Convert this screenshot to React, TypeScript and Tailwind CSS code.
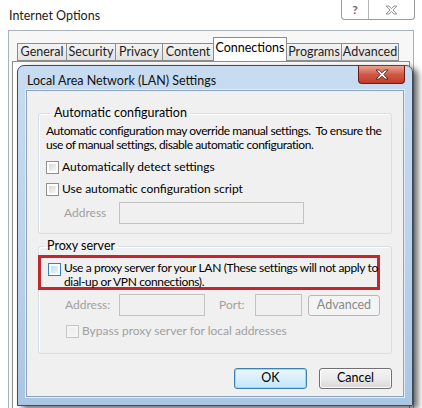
import React from 'react';

const font = { fontFamily: 'Lato, "Noto Sans", Arial, sans-serif' };

function Checkbox({ disabled, focused }: { disabled?: boolean; focused?: boolean }) {
  return (
    <div
      className={`w-[13px] h-[13px] shrink-0 border p-[2px] ${
        disabled ? 'border-[#c6c6c6] bg-[#f4f4f4]' : focused ? 'border-[#3c7fb1] bg-white' : 'border-[#8e8f8f] bg-white'
      }`}
    >
      <div
        className={`w-full h-full ${
          disabled
            ? 'bg-[#f0f0f0]'
            : focused
              ? 'bg-gradient-to-br from-[#b9e0f7] to-[#e4f4fc]'
              : 'bg-gradient-to-br from-[#d8d8d8] to-[#f8f8f8]'
        }`}
      />
    </div>
  );
}

const tabs = [
  { label: 'General', w: 'w-[50px]' },
  { label: 'Security', w: 'w-[50px]' },
  { label: 'Privacy', w: 'w-[48px]' },
  { label: 'Content', w: 'w-[52px]' },
  { label: 'Connections', w: 'w-[74px]', active: true },
  { label: 'Programs', w: 'w-[56px]' },
  { label: 'Advanced', w: 'w-[58px]' },
];

function Tab({ label, active, w }: { label: string; active?: boolean; w: string }) {
  return (
    <div
      className={`${w} flex items-center justify-center border border-[#8c8c8c] text-[12.5px] -mr-px ${
        active
          ? 'h-[24px] bg-white border-b-0 relative z-10 pb-[3px]'
          : 'h-[18px] bg-gradient-to-b from-[#f4f4f4] to-[#e2e2e2] text-[#1e1e1e]'
      }`}
    >
      {label}
    </div>
  );
}

function WinButton({ label, primary, disabled, w }: { label: string; primary?: boolean; disabled?: boolean; w: string }) {
  return (
    <div
      className={`${w} h-[21px] rounded-[3px] border flex items-center justify-center text-[12.5px] ${
        disabled
          ? 'border-[#b4b8bb] bg-[#f4f4f4] text-[#8a8a8a]'
          : primary
            ? 'border-[#3c7fb1] bg-gradient-to-b from-[#eaf6fd] via-[#d9effc] to-[#bee6fd] shadow-[inset_0_0_0_1px_#9fd5f5]'
            : 'border-[#707070] bg-gradient-to-b from-[#f3f3f3] via-[#ebebeb] to-[#d8d8d8] shadow-[inset_0_0_0_1px_#fbfbfb]'
      }`}
    >
      {label}
    </div>
  );
}

function GroupBox({ title, children, className }: { title: string; children: React.ReactNode; className?: string }) {
  return (
    <fieldset className={`min-w-0 border border-[#d5dfe5] rounded-[3px] shadow-[inset_1px_1px_0_#fff] ${className ?? ''}`}>
      <legend className="ml-[5px] px-[3px] text-[12.5px] leading-[14px]">{title}</legend>
      {children}
    </fieldset>
  );
}

function Field({ w }: { w: string }) {
  return <div className={`${w} h-[22px] border border-[#c2c2c2] bg-[#f0f0f0]`} />;
}

export default function App() {
  return (
    <div className="relative w-[422px] h-[408px] overflow-hidden bg-white text-black" style={font}>
      {/* Internet Options title bar */}
      <div className="h-[30px] flex items-start justify-between">
        <div className="pl-[9px] pt-[7px] text-[12.5px] text-[#1a1a1a]">Internet Options</div>
        <div className="mr-[7px] w-[74px] h-[20px] flex border border-t-0 border-[#9a9a9a] rounded-b-[4px] bg-white">
          <div className="w-[27px] flex items-center justify-center border-r border-[#b5b5b5] text-[12px] text-[#6a6a6a] font-bold">
            ?
          </div>
          <div className="flex-1 flex items-center justify-center">
            <svg width="13" height="10" viewBox="0 0 13 10">
              <path
                d="M1 1h3l2.5 2.6L9 1h3L8 5l4 4H9L6.5 6.4 4 9H1l4-4z"
                fill="#fafafa"
                stroke="#8a8a8a"
                strokeWidth="0.9"
                strokeLinejoin="round"
              />
            </svg>
          </div>
        </div>
      </div>

      {/* Internet Options client area */}
      <div className="mx-[8px] h-[400px] border border-[#a9b1b9] bg-[#f7f7f7] pt-[8px] px-[3px]">
        <div className="flex items-end pl-[5px] h-[22px]">
          {tabs.map((t) => (
            <Tab key={t.label} label={t.label} w={t.w} active={t.active} />
          ))}
        </div>
        <div className="h-[360px] border border-[#8c8c8c] bg-white" />
      </div>

      {/* LAN Settings dialog */}
      <div className="absolute left-[17px] top-[65px] w-[396px] h-[341px] rounded-t-[7px] border border-[#3f4c5b] bg-gradient-to-b from-[#c8dcf1] via-[#bcd3ec] to-[#aac6e4] shadow-[5px_3px_6px_rgba(0,0,0,0.6)] flex flex-col px-[8px] pb-[8px]">
        <div className="h-[24px] flex items-start justify-between">
          <div className="pt-[6px] pl-[1px] text-[12.5px] text-[#111]">Local Area Network (LAN) Settings</div>
          <div className="-mr-[1px] w-[47px] h-[18px] rounded-b-[4px] border border-t-0 border-[#6b1d14] bg-gradient-to-b from-[#e8a193] via-[#cf5a47] to-[#c23a25] flex items-center justify-center">
            <svg width="14" height="11" viewBox="0 0 14 11">
              <path
                d="M1 1h3.2l2.8 2.8L9.8 1H13L8.8 5.5 13 10H9.8L7 7.2 4.2 10H1l4.2-4.5z"
                fill="#fff"
                stroke="#5a1a12"
                strokeWidth="0.9"
                strokeLinejoin="round"
              />
            </svg>
          </div>
        </div>

        <div className="flex-1 border border-[#8aa3bf] shadow-[0_0_0_1px_#e3edf8] bg-[#f0f0f0] px-[11px] pt-[15px] flex flex-col">
          <GroupBox title="Automatic configuration" className="h-[128px] px-[7px]">
            <p className="text-[12px] leading-[14px] mt-[4px] whitespace-nowrap tracking-[-0.42px]">
              <span className="block">Automatic configuration may override manual settings.&nbsp; To ensure the</span>
              <span className="block">use of manual settings, disable automatic configuration.</span>
            </p>
            <div className="flex items-center gap-[3px] mt-[8px] text-[12px] leading-[14px]">
              <Checkbox />
              <span>Automatically detect settings</span>
            </div>
            <div className="flex items-center gap-[3px] mt-[8px] text-[12px] leading-[14px]">
              <Checkbox />
              <span>Use automatic configuration script</span>
            </div>
            <div className="flex items-center mt-[6px] pl-[18px] text-[12px] text-[#a0a0a0]">
              <span className="w-[55px]">Address</span>
              <Field w="w-[185px]" />
            </div>
          </GroupBox>

          <GroupBox title="Proxy server" className="mt-[5px] h-[115px] pl-0 pr-[11px]">
            <div className="-ml-px mt-[2px] h-[35px] border-[3px] border-[#c1272d] flex items-start gap-[3px] pl-[7px] pt-[3px] text-[12px] leading-[13.5px] whitespace-nowrap">
              <div className="mt-[2px]">
                <Checkbox focused />
              </div>
              <div className="tracking-[-0.35px]">
                <div>Use a proxy server for your LAN (These settings will not apply to</div>
                <div>dial-up or VPN connections).</div>
              </div>
            </div>
            <div className="flex items-center mt-[4px] pl-[26px] text-[12px] text-[#a0a0a0]">
              <span className="w-[55px]">Address:</span>
              <Field w="w-[87px]" />
              <span className="ml-[14px] w-[36px]">Port:</span>
              <Field w="w-[48px]" />
              <div className="ml-[6px]">
                <WinButton label="Advanced" disabled w="w-[72px]" />
              </div>
            </div>
            <div className="flex items-center gap-[3px] mt-[8px] pl-[27px] text-[12px] leading-[14px] text-[#a0a0a0]">
              <Checkbox disabled />
              <span>Bypass proxy server for local addresses</span>
            </div>
          </GroupBox>

          <div className="flex justify-end gap-[12px] mt-[14px]">
            <WinButton label="OK" primary w="w-[73px]" />
            <WinButton label="Cancel" w="w-[73px]" />
          </div>
        </div>
      </div>
    </div>
  );
}
